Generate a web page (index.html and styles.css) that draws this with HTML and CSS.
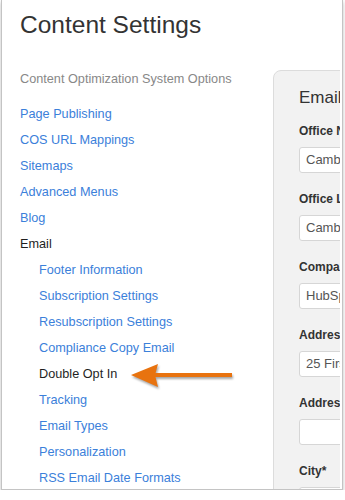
FILE: index.html
```html
<!DOCTYPE html>
<html>
<head>
    <title>Content Settings</title>
    <link rel="stylesheet" href="styles.css">
</head>
<body>
  <div class="shot">
    <h1 class="page-title">Content Settings</h1>
    <div class="settings-row">
      <div class="side-nav">
        <div class="nav-heading">Content Optimization System Options</div>
        <a class="nav-link">Page Publishing</a>
        <a class="nav-link">COS URL Mappings</a>
        <a class="nav-link">Sitemaps</a>
        <a class="nav-link">Advanced Menus</a>
        <a class="nav-link">Blog</a>
        <a class="nav-link current">Email</a>
        <a class="nav-link sub">Footer Information</a>
        <a class="nav-link sub">Subscription Settings</a>
        <a class="nav-link sub">Resubscription Settings</a>
        <a class="nav-link sub">Compliance Copy Email</a>
        <a class="nav-link sub current">Double Opt In</a>
        <a class="nav-link sub">Tracking</a>
        <a class="nav-link sub">Email Types</a>
        <a class="nav-link sub">Personalization</a>
        <a class="nav-link sub">RSS Email Date Formats</a>
      </div>
      <div class="panel-clip">
        <div class="panel">
          <h2 class="panel-title">Email Footer Information</h2>
          <div class="field">
            <label class="field-label">Office Name*</label>
            <div class="field-input">Cambridge Office</div>
          </div>
          <div class="field">
            <label class="field-label">Office Location*</label>
            <div class="field-input">Cambridge, MA</div>
          </div>
          <div class="field">
            <label class="field-label">Company Name*</label>
            <div class="field-input">HubSpot, Inc.</div>
          </div>
          <div class="field">
            <label class="field-label">Address 1*</label>
            <div class="field-input">25 First Street</div>
          </div>
          <div class="field">
            <label class="field-label">Address 2</label>
            <div class="field-input"></div>
          </div>
          <div class="field">
            <label class="field-label">City*</label>
            <div class="field-input">Cambridge</div>
          </div>
        </div>
      </div>
    </div>

    <!-- callout arrow pointing at the selected item -->
    <svg class="callout" width="120" height="40" viewBox="0 0 120 40">
      <g fill="#e8730f">
        <polygon points="10,20 37,9 34,20 37,32"></polygon>
        <rect x="34" y="18" width="77" height="4"></rect>
      </g>
    </svg>
  </div>
</body>
</html>
```

FILE: styles.css
```css
/* Content settings page */
body {
    margin: 0;
    background-color: #fff;
    font-family: 'Liberation Sans', Arial, sans-serif;
}

.shot {
    position: relative;
    margin-left: 1px;
    width: 342px;
    height: 490px;
    border-left: 1px solid #c4c4c4;
    border-right: 1px solid #c4c4c4;
    border-bottom: 1px solid #c4c4c4;
    box-sizing: border-box;
    box-shadow: 0 2px 4px rgba(0, 0, 0, 0.25);
    overflow: hidden;
    background-color: #fff;
}

.page-title {
    margin: 10px 0 26px 18px;
    font-size: 24.5px;
    line-height: 30px;
    font-weight: normal;
    color: #333;
}

.settings-row {
    display: flex;
}

.side-nav {
    width: 271px;
    flex: none;
    padding-left: 18px;
    box-sizing: border-box;
    font-size: 12.7px;
    line-height: 26px;
}

.nav-heading {
    color: #888;
    margin-bottom: 9px;
}

.nav-link {
    display: block;
    color: #3b80da;
    white-space: nowrap;
}

.nav-link.sub {
    padding-left: 19px;
}

.nav-link.current {
    color: #1f1f1f;
}

.panel-clip {
    flex: 1;
    overflow: hidden;
    margin-right: 2px;
    padding-top: 4px;
}

.panel {
    width: 300px;
    height: 500px;
    box-sizing: border-box;
    background-color: #f2f2f2;
    border: 1px solid #dcdcdc;
    border-radius: 8px 0 0 0;
    padding: 17px 0 0 25px;
    white-space: nowrap;
}

.panel-title {
    margin: 0 0 15px 0;
    font-size: 17px;
    line-height: 20px;
    font-weight: normal;
    color: #333;
}

.field {
    margin-bottom: 18px;
}

.field-label {
    display: block;
    font-size: 12px;
    line-height: 16px;
    font-weight: bold;
    color: #333;
    margin-bottom: 8px;
}

.field-input {
    height: 26px;
    box-sizing: border-box;
    width: 250px;
    background-color: #fff;
    border: 1px solid #d6d6d6;
    border-radius: 3px;
    padding: 0 6px;
    font-size: 13px;
    line-height: 24px;
    color: #555;
}

.callout {
    position: absolute;
    left: 119px;
    top: 355px;
    filter: drop-shadow(1px 2px 1px rgba(0, 0, 0, 0.35));
}
```
